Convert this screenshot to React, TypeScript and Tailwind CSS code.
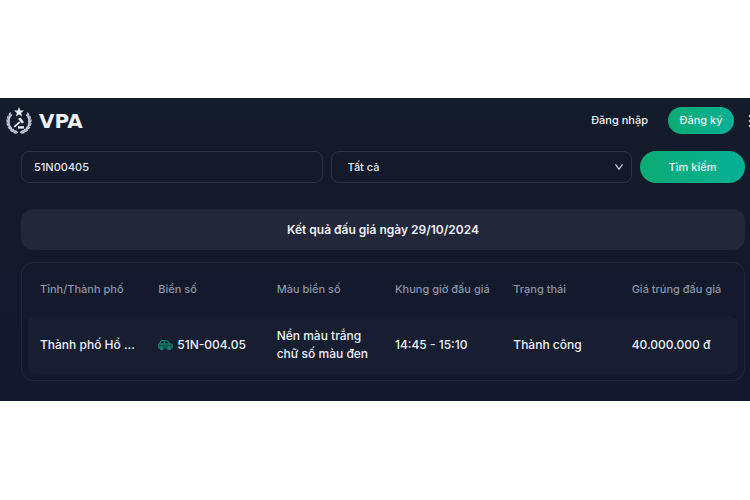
import React from 'react'

const columns = ['Tỉnh/Thành phố', 'Biển số', 'Màu biển số', 'Khung giờ đấu giá', 'Trạng thái', 'Giá trúng đấu giá']

const results = [
    {
        province: 'Thành phố Hồ ...',
        plate: '51N-004.05',
        color: 'Nền màu trắng chữ số màu đen',
        time: '14:45 - 15:10',
        status: 'Thành công',
        price: '40.000.000 đ',
    },
]

// leaves of the left branch, the right one is mirrored
const leaves = [
    [10.6, 25, 24],
    [7.6, 23.4, 40],
    [5.2, 20.8, 56],
    [3.6, 17.6, 74],
    [3.2, 14.2, 92],
    [3.8, 10.8, 110],
    [5.4, 7.8, 128],
]

const Branch = () => (
    <g>
        <path d="M12 25.2 C4 23.4 1 15 5.8 7.4" fill="none" stroke="#a3adbd" strokeWidth="1.8" />
        {leaves.map(([x, y, angle]) => (
            <g key={y} transform={`translate(${x} ${y}) rotate(${angle})`}>
                <ellipse cx="-0.4" cy="0.9" rx="1.9" ry="0.8" transform="rotate(-14)" />
                <ellipse cx="0.4" cy="-0.9" rx="1.9" ry="0.8" transform="rotate(14)" />
            </g>
        ))}
    </g>
)

const Emblem = () => (
    <svg viewBox="0 0 28 28" className="h-7 w-7" fill="#c3cbd8" aria-hidden="true">
        <Branch />
        <g transform="translate(28 0) scale(-1 1)">
            <Branch />
        </g>
        <g fill="#e8ecf3">
            <path d="M14 0 L15.3 3.5 L19 3.6 L16.1 5.9 L17.1 9.5 L14 7.4 L10.9 9.5 L11.9 5.9 L9 3.6 L12.7 3.5 Z" />
            <path d="M13 11.8 L15.6 10.8 L19 15.2 L17 16.6 Z" />
            <path d="M14.2 14.2 L15.4 15.8 L9.8 20.6 L8.7 19.2 Z" />
            <path d="M13 19.2 H19 V21.6 H13 Z" />
        </g>
    </svg>
)

const CarIcon = () => (
    <svg viewBox="0 0 15 12" className="h-3 w-[15px] shrink-0" fill="none" stroke="#128068" strokeWidth="1.2" aria-hidden="true">
        <path d="M2 9 H1.4 Q0.7 9 0.7 8.2 V6 Q0.7 5 1.6 4.6 L2.8 2.4 Q3.2 1.6 4 1.6 H8 Q8.8 1.6 9.4 2.2 L11.6 4.5 L13 5 Q14.3 5.4 14.3 6.6 V8.2 Q14.3 9 13.6 9 H12.8 M5.2 9 H9.6" />
        <path d="M1.8 4.8 H11.6 M6.3 2 V4.5" />
        <path d="M1 5 H13 L14 6 V8.6 H1 Z" fill="#128068" fillOpacity="0.6" stroke="none" />
        <circle cx="3.6" cy="9.2" r="1.4" fill="#128068" />
        <circle cx="11.2" cy="9.2" r="1.4" fill="#128068" />
    </svg>
)

const Header = () => {
    return (
        <header className="flex h-[45px] items-center justify-between overflow-hidden pl-[5px]">
            <a href="#" className="flex items-center gap-x-1.5">
                <Emblem />
                <span className="font-['DejaVu_Sans',sans-serif] text-[20px] leading-6 font-bold text-[#eef1f6]">VPA</span>
            </a>
            <div className="flex items-center">
                <a href="#" className="mr-5 text-[11px] font-medium">Đăng nhập</a>
                <button className="h-[27px] w-[66px] rounded-full bg-gradient-to-r from-[#0bab72] to-[#06b096] text-[11px] font-medium">Đăng ký</button>
                <button className="-mr-2 ml-3 flex h-6 w-3 items-center" aria-label="Menu">
                    <svg viewBox="0 0 12 24" className="h-6 w-3" fill="#cfd5e0">
                        <circle cx="4" cy="7" r="1.2" />
                        <circle cx="4" cy="12" r="1.2" />
                        <circle cx="4" cy="17" r="1.2" />
                    </svg>
                </button>
            </div>
        </header>
    )
}

const SearchForm = () => {
    return (
        <form className="grid grid-cols-[1fr_1fr_105px] gap-x-2 pt-2" onSubmit={(e) => e.preventDefault()}>
            <input
                type="text"
                aria-label="Biển số"
                defaultValue="51N00405"
                className="h-8 w-full min-w-0 rounded-lg border border-[#2b3243] bg-transparent px-3 text-[11px] font-medium text-[#e0e4ec] outline-none"
            />
            <div className="relative min-w-0">
                <select
                    aria-label="Tỉnh/Thành phố"
                    className="h-8 w-full appearance-none rounded-lg border border-[#2b3243] bg-[#131a2a] px-4 text-[11px] font-medium text-[#e0e4ec] outline-none"
                >
                    <option>Tất cả</option>
                </select>
                <svg viewBox="0 0 10 10" className="pointer-events-none absolute top-[11px] right-2 h-2.5 w-2.5" fill="none" stroke="#d4d9e2" strokeWidth="1.1">
                    <path d="M1.5 2.4 L5 7.4 L8.5 2.4" />
                </svg>
            </div>
            <button className="h-8 rounded-full bg-gradient-to-r from-[#0bab72] to-[#06b096] text-[11px] font-medium">Tìm kiếm</button>
        </form>
    )
}

const ResultTable = () => {
    return (
        <div className="mt-3 rounded-xl border border-[#20283a] px-1.5 pb-1.5">
            <table className="w-full table-fixed text-left">
                <thead>
                    <tr className="h-[53px] text-[11px] text-[#8c93a5]">
                        {columns.map((column) => (
                            <th key={column} className="px-3 font-medium whitespace-nowrap">{column}</th>
                        ))}
                    </tr>
                </thead>
                <tbody>
                    {results.map((item) => (
                        <tr key={item.plate} className="h-[58px] bg-[#181e32] text-[12px] leading-[18px] font-medium text-[#eceff5]">
                            <td className="rounded-l-lg pl-3 whitespace-nowrap">{item.province}</td>
                            <td className="px-3">
                                <div className="flex items-center gap-x-1">
                                    <CarIcon />
                                    <span className="whitespace-nowrap">{item.plate}</span>
                                </div>
                            </td>
                            <td className="px-3">{item.color}</td>
                            <td className="px-3 whitespace-nowrap">{item.time}</td>
                            <td className="px-3">{item.status}</td>
                            <td className="rounded-r-lg px-3 whitespace-nowrap">{item.price}</td>
                        </tr>
                    ))}
                </tbody>
            </table>
        </div>
    )
}

const App = () => {
    return (
        <div className="bg-white py-[98px] font-[Inter,'Noto_Sans',sans-serif]">
            <div className="bg-[#131a2a] bg-gradient-to-b from-[#131c2a] to-[#13182d] text-[#eef1f6]">
                <Header />
                <main className="pr-[5px] pb-5 pl-[21px]">
                    <SearchForm />
                    <h1 className="mt-[26px] rounded-xl bg-[#22273a] py-3 text-center text-[12px] leading-[17px] font-semibold">
                        Kết quả đấu giá ngày 29/10/2024
                    </h1>
                    <ResultTable />
                </main>
            </div>
        </div>
    )
}

export default App
